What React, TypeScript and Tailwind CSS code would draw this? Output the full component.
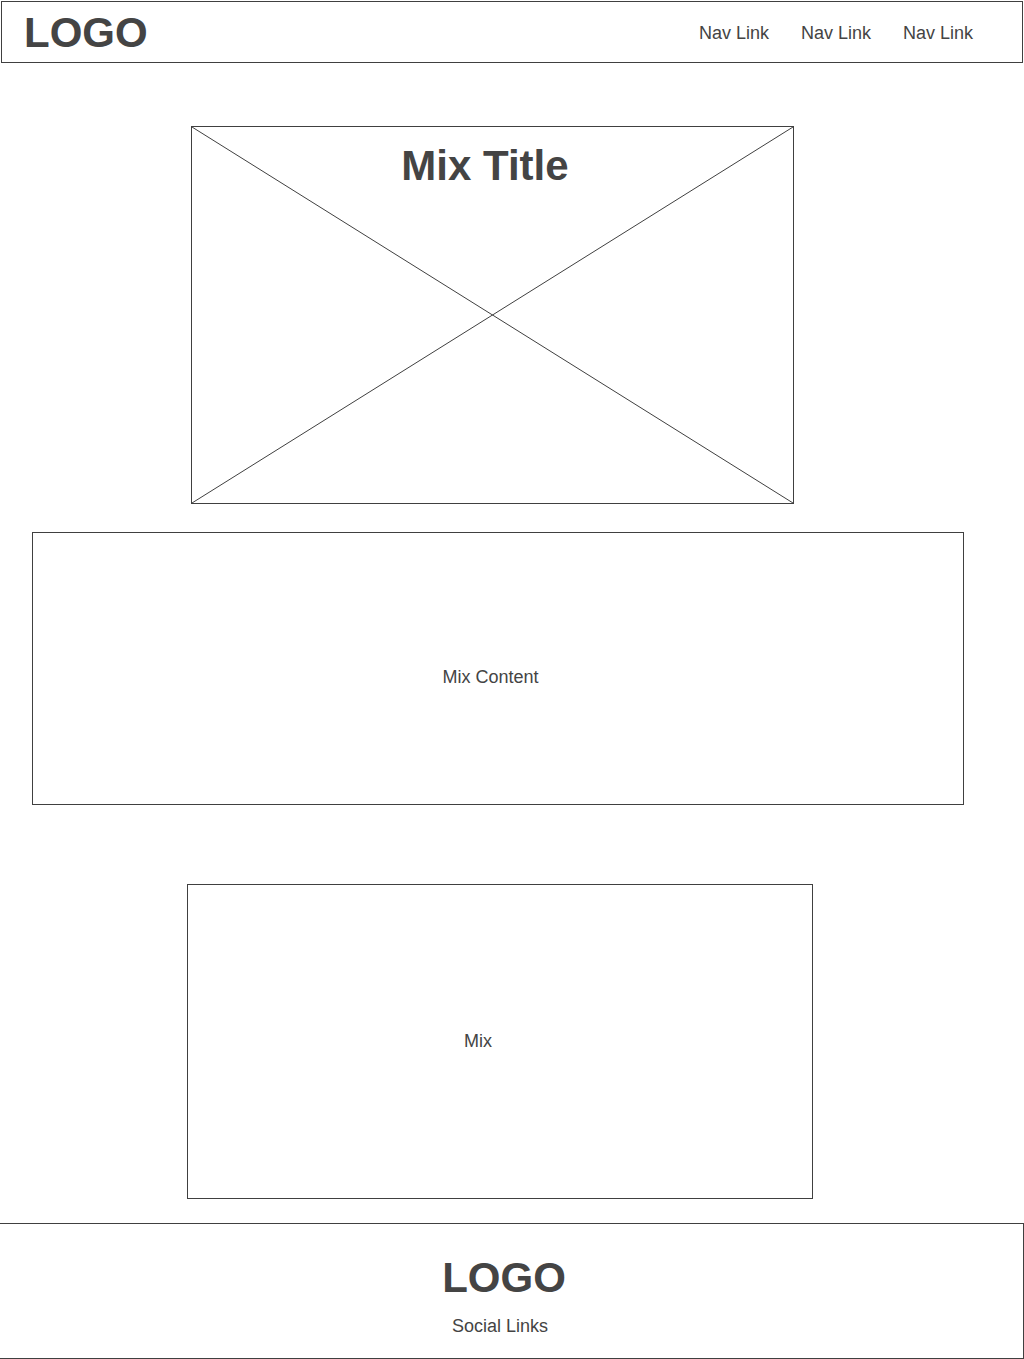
export default function App() {
  return (
    <div className="flex min-h-screen flex-col bg-white font-['Liberation_Sans',Arial,sans-serif] text-lg text-[#444444]">
      <header className="mx-px mt-px flex h-[62px] items-center justify-between border border-[#404040] pt-0.5 pr-[49px] pl-[22px]">
        <a href="#" className="text-[42px] leading-[48px] font-bold">LOGO</a>
        <nav className="flex gap-8">
          <a href="#">Nav Link</a>
          <a href="#">Nav Link</a>
          <a href="#">Nav Link</a>
        </nav>
      </header>
      <main className="flex flex-1 flex-col">
        <section className="relative mt-[63px] mr-[230px] ml-[191px] h-[378px] border border-[#404040]">
          <svg className="absolute inset-0 h-full w-full" viewBox="0 0 601 376" preserveAspectRatio="none" stroke="#404040" strokeWidth="1" aria-hidden="true">
            <path d="M0 0L601 376M601 0L0 376" vectorEffect="non-scaling-stroke" />
          </svg>
          <h1 className="relative pt-[15px] pr-[15px] text-center text-[42px] leading-[48px] font-bold">Mix Title</h1>
        </section>
        <section className="mt-7 mr-[60px] ml-8 flex h-[273px] items-center justify-center border border-[#404040] pt-4 pr-[15px]">
          <p>Mix Content</p>
        </section>
        <section className="mt-[79px] mr-[211px] ml-[187px] flex h-[315px] items-center justify-center border border-[#404040] pr-11 pb-0.5">
          <p>Mix</p>
        </section>
      </main>
      <footer className="mt-6 flex h-[136px] flex-col items-center border-y border-r border-[#404040] pt-[30px] pr-[15px]">
        <a href="#" className="text-[42px] leading-[48px] font-bold">LOGO</a>
        <p className="mt-2.5 pr-2">Social Links</p>
      </footer>
    </div>
  );
}
